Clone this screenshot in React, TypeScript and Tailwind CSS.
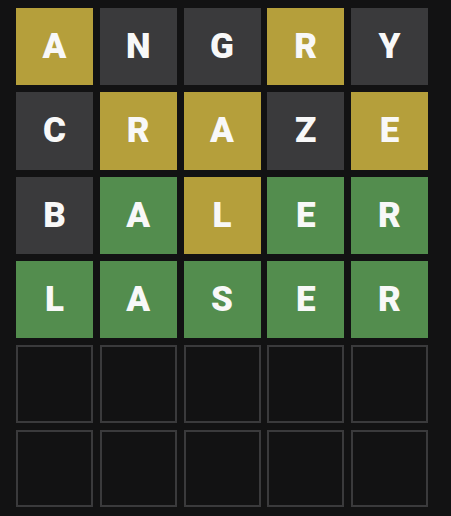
import React from "react";

type S = "y" | "g" | "x" | "e";
const rows: { l: string; s: S }[][] = [
  [["A","y"],["N","x"],["G","x"],["R","y"],["Y","x"]],
  [["C","x"],["R","y"],["A","y"],["Z","x"],["E","y"]],
  [["B","x"],["A","g"],["L","y"],["E","g"],["R","g"]],
  [["L","g"],["A","g"],["S","g"],["E","g"],["R","g"]],
  [["","e"],["","e"],["","e"],["","e"],["","e"]],
  [["","e"],["","e"],["","e"],["","e"],["","e"]],
].map(r => r.map(([l, s]) => ({ l, s: s as S })));

const cls: Record<S, string> = {
  y: "bg-[#b59f3b]",
  g: "bg-[#538d4e]",
  x: "bg-[#3a3a3c]",
  e: "border-2 border-[#3a3a3c]",
};

export default function App() {
  return (
    <div className="w-[451px] h-[516px] bg-[#121213] pt-[8px] pl-[16px]">
      <div className="grid grid-cols-5 grid-rows-6 gap-x-[6.75px] gap-y-[7px] w-[412px] h-[499px]">
        {rows.flat().map((t, i) => (
          <div
            key={i}
            className={`flex items-center justify-center text-[#f8f8f8] font-black text-[35px] leading-none ${cls[t.s]}`}
            style={{ fontFamily: 'Roboto, "Liberation Sans", Arial, sans-serif' }}
          >
            {t.l}
          </div>
        ))}
      </div>
    </div>
  );
}
